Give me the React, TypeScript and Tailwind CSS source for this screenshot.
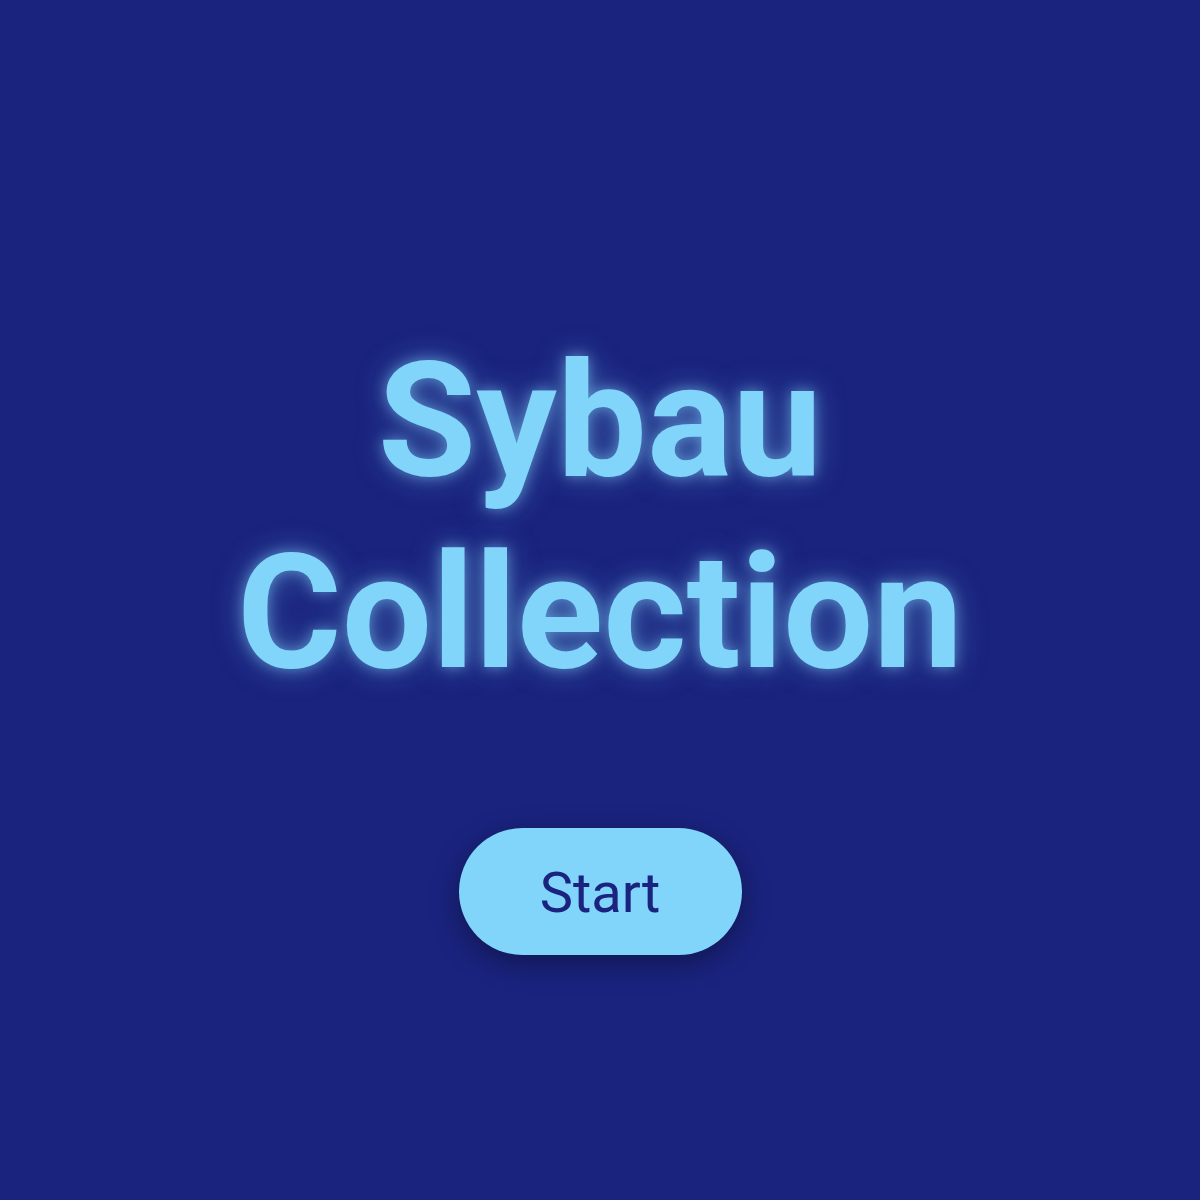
export default function App() {
  return (
    <div className="min-h-[1200px] w-full bg-[#1a237e] flex flex-col items-center justify-center pt-[80px] font-['Roboto',sans-serif]">
      <h1 className="text-[160px] leading-[192px] font-bold text-[#81d4fa] text-center [text-shadow:0_0_14px_rgba(129,212,250,0.55),0_0_32px_rgba(129,212,250,0.35)]">
        Sybau
        <br />
        Collection
      </h1>
      <button className="mt-[119px] w-[283px] h-[127px] pt-[3px] rounded-full bg-[#81d4fa] text-[#1a237e] text-[56px] leading-none shadow-[0_8px_28px_rgba(0,0,0,0.35)]">
        Start
      </button>
    </div>
  );
}
